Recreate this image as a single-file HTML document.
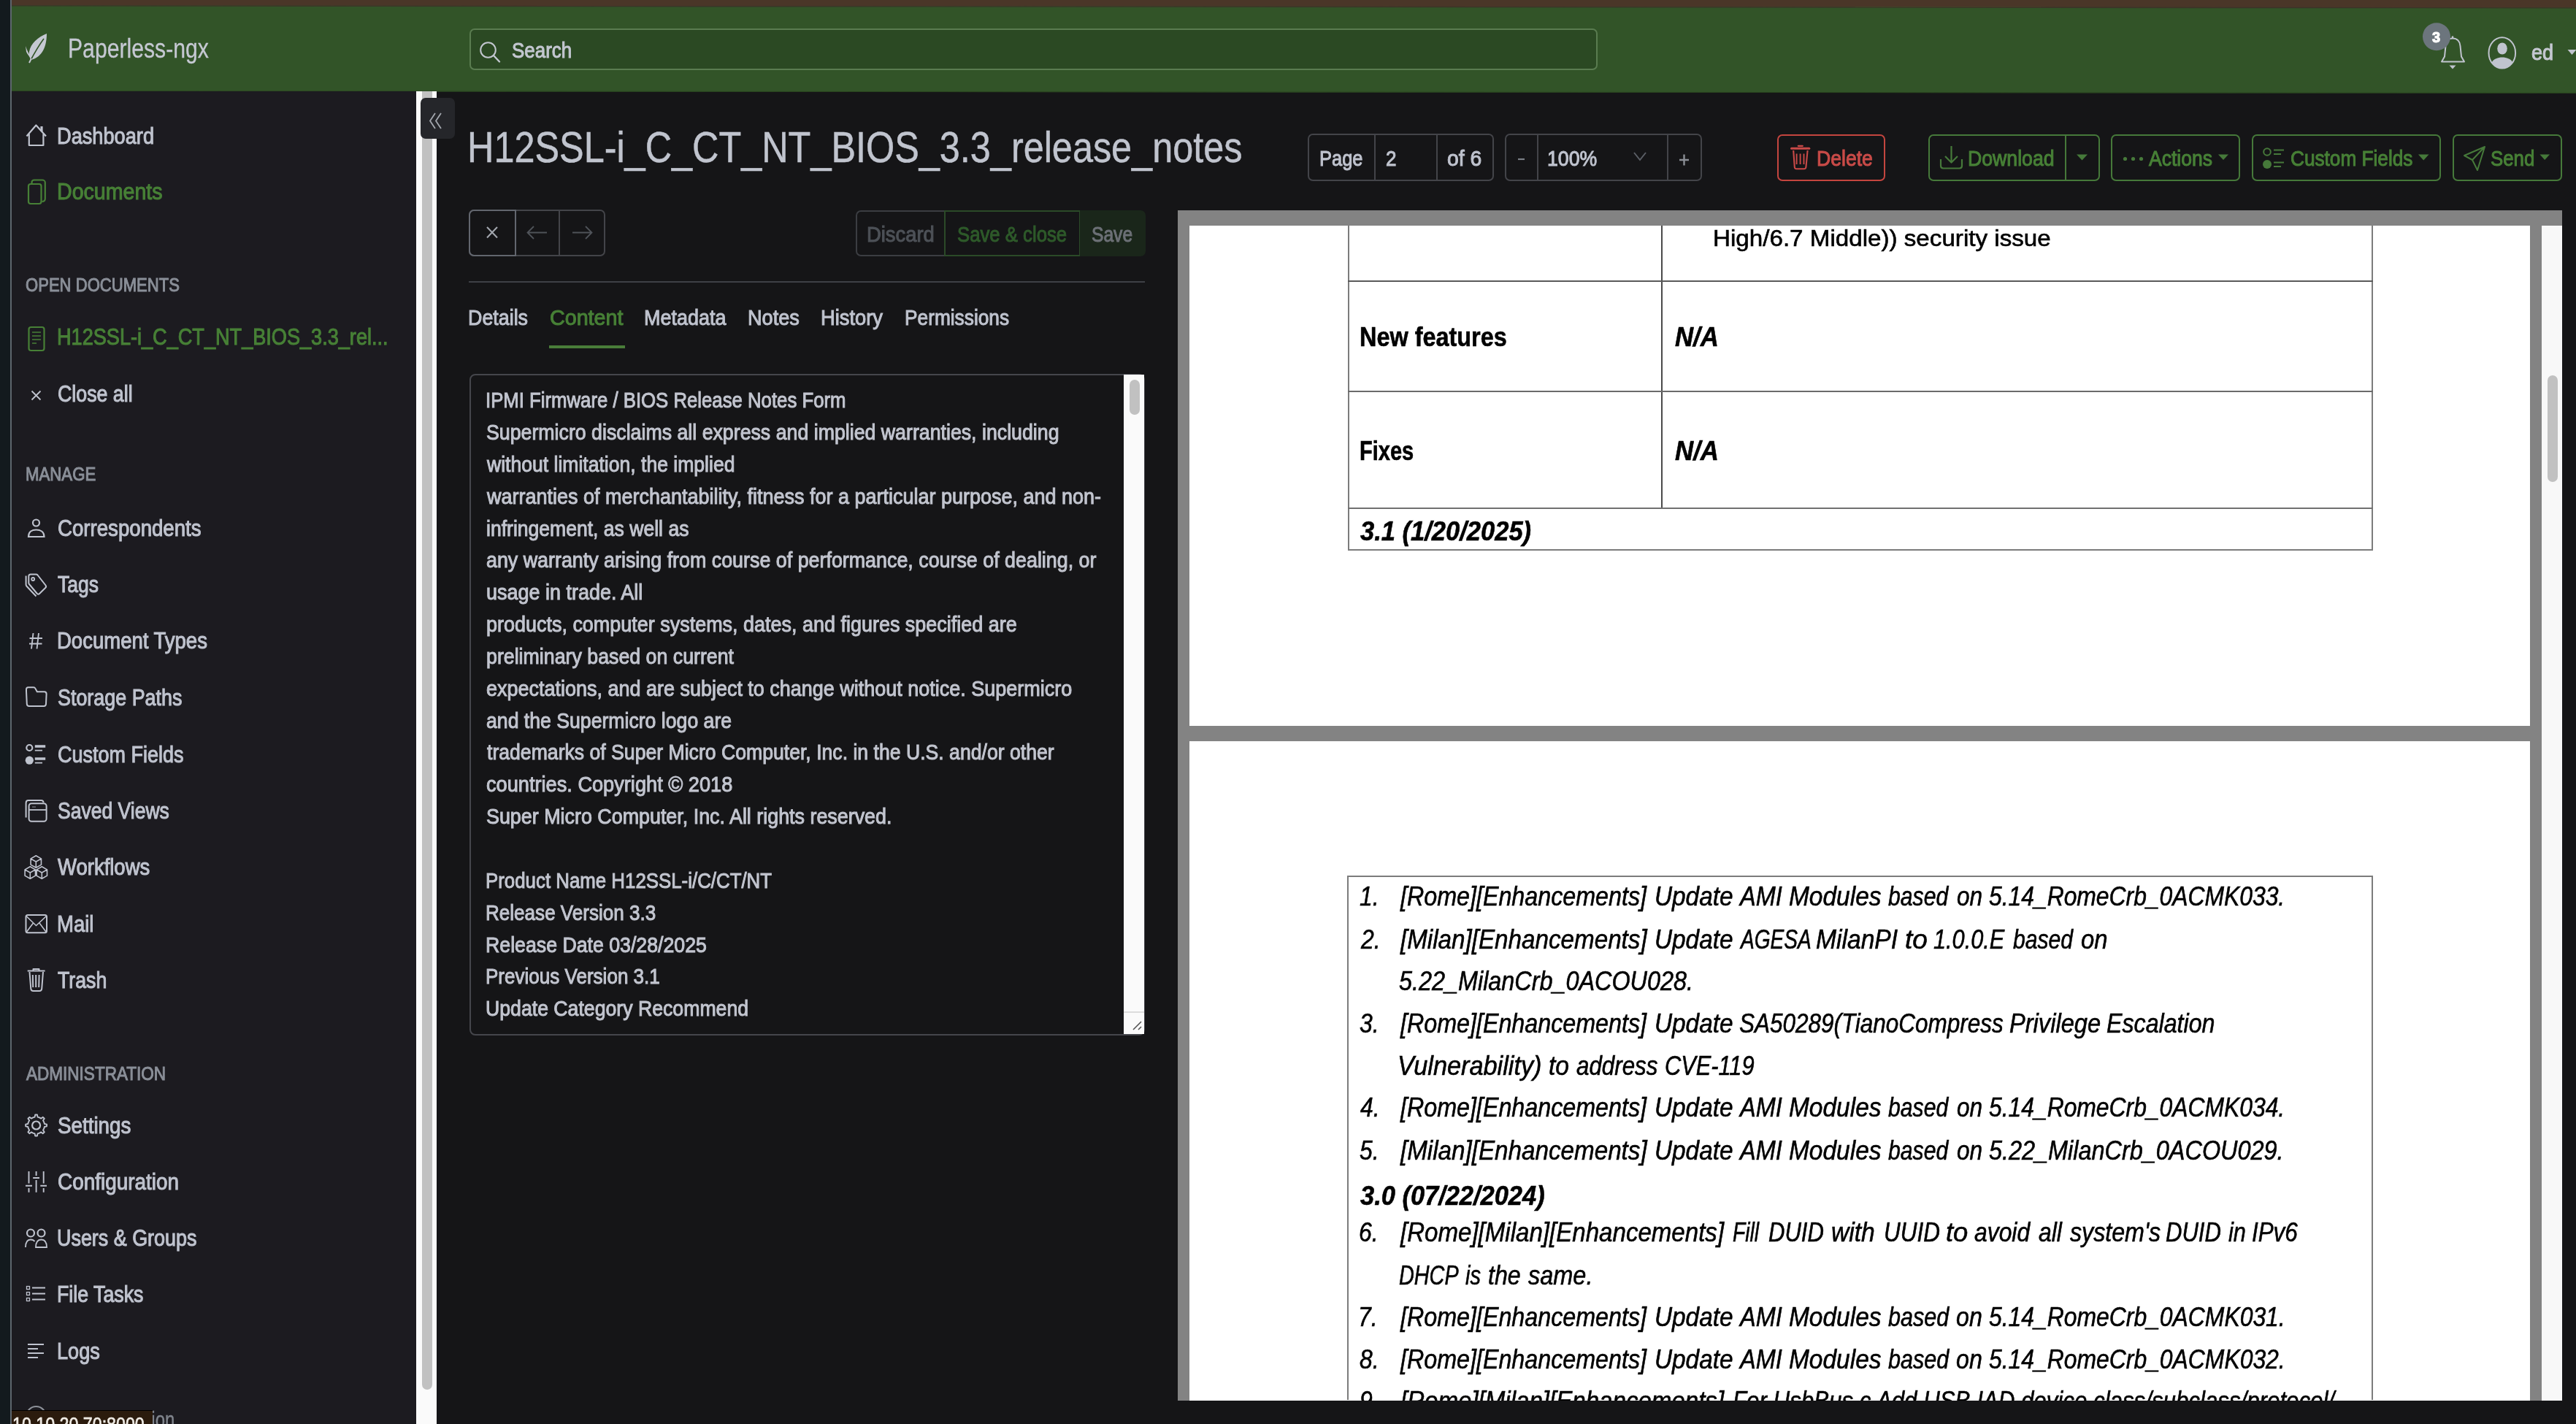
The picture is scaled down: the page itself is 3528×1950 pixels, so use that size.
<!DOCTYPE html>
<html><head><meta charset="utf-8">
<style>
*{box-sizing:border-box;margin:0;padding:0}
html,body{width:3528px;height:1950px;overflow:hidden;background:#151517;font-family:"Liberation Sans",sans-serif;position:relative}
.a{position:absolute}
.t{position:absolute;white-space:pre;line-height:1;transform-origin:0 0}
svg{position:absolute;overflow:visible}
.grp{position:absolute;border:2px solid #434449;border-radius:7px}
.dv{position:absolute;width:2px;background:#434449}
.gb{border-color:#46793a}
.gdv{background:#46793a}
</style></head><body><div id="wrap" style="position:absolute;left:0;top:0;width:3528px;height:1950px;filter:blur(0.45px)">
<!-- chrome -->
<div class="a" style="left:0;top:0;width:14px;height:1950px;background:#131a1e"></div>
<div class="a" style="left:14px;top:0;width:2px;height:1950px;background:#5d666d"></div>
<svg style="left:0;top:0" width="3528" height="130" viewBox="0 0 3528 130">
  <polygon points="16,0 3528,0 3528,127.8 16,125" fill="#325428"/>
  <polygon points="16,0 3528,0 3528,10.3 16,7.3" fill="#4a3628"/>
  <line x1="16" y1="7.9" x2="3528" y2="10.9" stroke="#3b3428" stroke-width="1.3"/>
  <line x1="16" y1="124.6" x2="3528" y2="127.4" stroke="#29431f" stroke-width="1"/>
</svg>
<div class="a" style="left:16px;top:125px;width:554px;height:1825px;background:#1c1b20"></div>
<div class="a" style="left:570px;top:125px;width:28px;height:1825px;background:#fafafa"></div>
<div class="a" style="left:578px;top:125px;width:14px;height:1778px;background:#c1c1c1;border-radius:0 0 7px 7px"></div>

<!-- navbar content -->
<svg style="left:34px;top:45px" width="32" height="42" viewBox="0 0 32 42">
  <path d="M30 1 C18 6 8 14 6 26 C5 31 7 35 9 37 C20 34 30 24 30 1 Z" fill="#c5c8d2"/>
  <path d="M1 18 C3 24 6 30 10 36 C7 34 4 30 2 26 Z" fill="#c5c8d2"/>
  <path d="M26 8 C20 16 14 26 6 41" stroke="#325428" stroke-width="1.6" fill="none"/>
  <path d="M6 41 L9 35" stroke="#c5c8d2" stroke-width="2" fill="none"/>
</svg>
<div class="a" style="left:642.5px;top:38.5px;width:1545px;height:57px;border:2px solid #5a7c50;border-radius:7px;background:#2b4923"></div>
<svg style="left:655px;top:55px" width="34" height="34" viewBox="0 0 34 34">
  <circle cx="13.5" cy="13.5" r="10.3" stroke="#c3c7d0" stroke-width="2" fill="none"/>
  <path d="M21 21 L29 29.5" stroke="#c3c7d0" stroke-width="2.4" stroke-linecap="round"/>
</svg>
<svg style="left:3318px;top:30px" width="64" height="70" viewBox="0 0 64 70">
  <path d="M41 22.5 C35.5 22.5 32 26.5 31.5 33 L30 47.5 L26 54.5 L57 54.5 L53 47.5 L51.5 33 C51 26.5 47 22.5 41 22.5 Z" stroke="#c0c4ce" stroke-width="2" fill="none" stroke-linejoin="round"/>
  <path d="M41 19.5 L41 23" stroke="#c0c4ce" stroke-width="2.4"/>
  <path d="M36.5 59.5 L45.5 59.5 L41 64.5 Z" fill="#c0c4ce"/>
  <circle cx="19" cy="20.3" r="19" fill="#6c757d"/>
</svg>
<svg style="left:3400px;top:40px" width="60" height="70" viewBox="0 0 60 70">
  <ellipse cx="26.8" cy="32.4" rx="18.3" ry="21.2" stroke="#c0c4ce" stroke-width="2" fill="none"/>
  <ellipse cx="27" cy="26.5" rx="6.8" ry="8" fill="#c0c4ce"/>
  <path d="M12.5 45.5 C15.5 40.5 21 38.5 27 38.5 C33 38.5 38.5 40.5 41.5 45.5 C38 50.5 33 53.6 27 53.6 C21 53.6 16 50.5 12.5 45.5 Z" fill="#c0c4ce"/>
</svg>
<svg style="left:3514px;top:67px" width="14" height="10" viewBox="0 0 14 10"><path d="M2.5 1 L14.5 1 L8.5 8 Z" fill="#c0c4ce"/></svg>

<!-- collapse button -->
<div class="a" style="left:576px;top:134px;width:47px;height:56px;background:#25262a;border-radius:7px"></div>
<svg style="left:586px;top:152px" width="24" height="28" viewBox="0 0 24 28">
  <path d="M10 3 L3 13.5 L10 24 M18 3 L11 13.5 L18 24" stroke="#a3a7ae" stroke-width="1.8" fill="none"/>
</svg>

<!-- sidebar icons -->
<g id="sbicons"></g>
<svg style="left:0;top:0" width="600" height="1950" viewBox="0 0 600 1950" fill="none" stroke="#bfc3ce" stroke-width="2.2">
  <!-- house -->
  <path d="M36.5 186.5 L49.4 171.5 L63 186.5 M39.8 183.5 L39.8 199 L59.4 199 L59.4 183.5" stroke-linejoin="round"/><path d="M57 173 L57 180" stroke-width="3.2"/>
  <!-- files (green) -->
  <g stroke="#478036">
    <rect x="39" y="252" width="17.5" height="27" rx="3"/>
    <path d="M43.5 251.5 L43.5 250 C43.5 248 45 246.5 47 246.5 L58 246.5 C60 246.5 61.8 248 61.8 250 L61.8 272 C61.8 274.5 60 276 57.5 276"/>
  </g>
  <!-- file-text (green) -->
  <g stroke="#478036">
    <rect x="39.5" y="448" width="21" height="32" rx="3"/>
    <path d="M44 455 L56 455 M44 460 L56 460 M44 465 L56 465 M44 470 L50 470" stroke-width="1.6"/>
  </g>
  <!-- x close all -->
  <path d="M43.5 535.5 L55.5 547.5 M55.5 535.5 L43.5 547.5" stroke-width="1.8"/>
  <!-- person -->
  <circle cx="49.5" cy="716" r="4.5"/>
  <path d="M39 735 C39 728 44 725.5 49.5 725.5 C55 725.5 60.5 728 60.5 735 Z"/>
  <!-- tags -->
  <path d="M39.3 789 C39.3 787.5 40.5 786.5 42 786.5 L49.5 786.5 C50.3 786.5 51 786.9 51.5 787.5 L62.5 801.5 C63.3 802.5 63.2 803.8 62.4 804.7 L54 813 C53.1 813.9 51.8 813.9 50.9 813 L40 800 C39.5 799.4 39.3 798.7 39.3 798 Z" stroke-linejoin="round" stroke-width="2"/>
  <circle cx="45.2" cy="793" r="2" stroke-width="1.8"/>
  <path d="M35.6 788.5 L35.6 800.5 C35.6 801.4 35.9 802.1 36.5 802.8 L49.5 816.5" stroke-width="2"/>
  <!-- hash -->
  <path d="M45.5 867 L43 888.5 M53 867 L50.5 888.5 M40.5 874 L58 874 M40 881.5 L57.5 881.5" stroke-width="1.9"/>
  <!-- storage folder -->
  <path d="M36 946.5 L36.8 964 C36.9 965.8 38 967 40 967 L60 967 C61.8 967 62.9 965.8 63 964 L63.6 950.5 C63.6 948.5 62.6 947.3 60.6 947.3 L50.8 947.3 L48.3 942.6 C47.8 941.6 47 941.2 46 941.2 L38.6 941.2 C36.9 941.2 36 942.3 36 944 Z" stroke-linejoin="round" stroke-width="2"/>
  <!-- custom fields -->
  <circle cx="40.3" cy="1024" r="4"/>
  <circle cx="40.3" cy="1041.2" r="5.6" fill="#bfc3ce" stroke="none"/>
  <path d="M47.8 1022 L62.2 1022 M47.8 1039 L62.2 1039" stroke-width="3.6"/>
  <path d="M47.8 1027.6 L58 1027.6 M47.8 1044.6 L58 1044.6" stroke-width="1.8"/>
  <!-- saved views (window stack) -->
  <rect x="39.6" y="1100.3" width="24" height="24.4" rx="3.5" stroke-width="2"/>
  <path d="M35.6 1119.5 L35.6 1099.5 C35.6 1097.4 36.9 1096.1 39 1096.1 L56.5 1096.1 C58.3 1096.1 59.4 1097.1 59.6 1098.8" stroke-width="2"/>
  <path d="M40 1109 L63.5 1109" stroke-width="1.8"/>
  <path d="M44 1105 L49 1105" stroke-width="1" stroke="#8a8e96"/>
  <!-- workflows boxes -->
  <path d="M49.3 1171.7 L56.49 1175.85 L56.49 1184.15 L49.3 1188.3 L42.11 1184.15 L42.11 1175.85 Z M42.11 1175.85 L49.3 1180 L56.49 1175.85 M49.3 1180 L49.3 1188.3 M41.3 1186.7 L48.49 1190.85 L48.49 1199.15 L41.3 1203.3 L34.11 1199.15 L34.11 1190.85 Z M34.11 1190.85 L41.3 1195 L48.49 1190.85 M41.3 1195 L41.3 1203.3 M57.3 1186.7 L64.49 1190.85 L64.49 1199.15 L57.3 1203.3 L50.11 1199.15 L50.11 1190.85 Z M50.11 1190.85 L57.3 1195 L64.49 1190.85 M57.3 1195 L57.3 1203.3 " stroke-linejoin="round" stroke-width="1.6"/>
  <!-- mail -->
  <rect x="35.5" y="1253" width="28.5" height="24.2" rx="2.5" stroke-width="2"/>
  <path d="M36 1254.5 L49.5 1267.5 L63.5 1254.5 M36.5 1276 L45.5 1264 M63 1276 L54 1264" stroke-width="1.6"/>
  <!-- trash -->
  <path d="M37.7 1329.5 L61.6 1329.5 M45.5 1329 L45.5 1327 L53.5 1327 L53.5 1329 M40.5 1331 L42.3 1354 C42.5 1356 43.5 1357 45.5 1357 L54 1357 C56 1357 57 1356 57.2 1354 L59 1331 M44.8 1335 L45.2 1352 M49.2 1335 L49.2 1352 M53.6 1335 L53.2 1352" stroke-linejoin="round" stroke-width="2"/>
  <!-- gear -->
  <circle cx="49.6" cy="1541" r="5.5"/>
  <path d="M60.22 1536.60 L60.93 1539.02 L64.04 1539.64 L64.04 1542.36 L60.93 1542.98 L60.22 1545.40 L59.01 1547.61 L60.77 1550.24 L58.84 1552.17 L56.21 1550.41 L54.00 1551.62 L51.58 1552.33 L50.96 1555.44 L48.24 1555.44 L47.62 1552.33 L45.20 1551.62 L42.99 1550.41 L40.36 1552.17 L38.43 1550.24 L40.19 1547.61 L38.98 1545.40 L38.27 1542.98 L35.16 1542.36 L35.16 1539.64 L38.27 1539.02 L38.98 1536.60 L40.19 1534.39 L38.43 1531.76 L40.36 1529.83 L42.99 1531.59 L45.20 1530.38 L47.62 1529.67 L48.24 1526.56 L50.96 1526.56 L51.58 1529.67 L54.00 1530.38 L56.21 1531.59 L58.84 1529.83 L60.77 1531.76 L59.01 1534.39 Z" stroke-linejoin="round" stroke-width="1.9"/>
  <!-- sliders -->
  <path d="M39.5 1604 L39.5 1620.5 M39.5 1627 L39.5 1632.7 M49.6 1604 L49.6 1610 M49.6 1616 L49.6 1632.7 M59.7 1604 L59.7 1620.5 M59.7 1627 L59.7 1632.7 M35 1623.8 L44 1623.8 M45.2 1613 L54 1613 M55.3 1623.8 L64 1623.8" stroke-width="1.9"/>
  <!-- people -->
  <circle cx="42" cy="1688.5" r="5"/>
  <circle cx="56.5" cy="1688.5" r="5"/>
  <path d="M35 1708 C35 1700 38 1697.5 42 1697.5 C44.5 1697.5 46.5 1698.5 47.5 1700 M49 1708 C49 1700 52 1697.5 56.5 1697.5 C61 1697.5 64 1700 64 1708 Z" stroke-width="1.8"/>
  <!-- list task -->
  <rect x="36.5" y="1761.5" width="4" height="4" stroke-width="1.3"/>
  <rect x="36.5" y="1769.5" width="4" height="4" stroke-width="1.3"/>
  <rect x="36.5" y="1777.5" width="4" height="4" stroke-width="1.3"/>
  <path d="M44 1763.5 L62 1763.5 M44 1771.5 L62 1771.5 M44 1779.5 L62 1779.5" stroke-width="1.8"/>
  <!-- logs text-left -->
  <path d="M38 1841 L60 1841 M38 1847 L52 1847 M38 1853 L60 1853 M38 1859 L52 1859" stroke-width="1.8"/>
  <!-- info circle (documentation) -->
  <circle cx="49.5" cy="1939" r="13" stroke="#8d9199"/>
</svg>

<!-- header toolbar groups -->
<div class="grp" style="left:1791px;top:183px;width:255px;height:64.5px"></div>
<div class="dv" style="left:1882px;top:183px;height:64.5px"></div>
<div class="dv" style="left:1967px;top:183px;height:64.5px"></div>
<div class="grp" style="left:2061px;top:183px;width:269.5px;height:64.5px"></div>
<div class="dv" style="left:2105px;top:183px;height:64.5px"></div>
<div class="dv" style="left:2283px;top:183px;height:64.5px"></div>
<svg style="left:2074px;top:200px" width="260" height="36" viewBox="0 0 260 36" fill="none">
  <path d="M5 18 L14 18" stroke="#7b7f86" stroke-width="2.2"/>
  <path d="M164 9 L172 19 L180 9" stroke="#5b5f66" stroke-width="2"/>
  <path d="M226 19 L239 19 M232.5 11.5 L232.5 26.5" stroke="#8a8e95" stroke-width="2.4"/>
</svg>
<div class="grp" style="left:2433.5px;top:183.5px;width:148.5px;height:64px;border-color:#c4453f"></div>
<svg style="left:2450px;top:196px" width="32" height="38" viewBox="0 0 32 38" fill="none" stroke="#c94a48" stroke-width="2.1">
  <path d="M3.5 7.2 L27.8 7.2" stroke-width="3" stroke-linecap="round"/>
  <path d="M12.8 3.8 L18.8 3.8" stroke-width="2.2" stroke-linecap="round"/>
  <path d="M6.2 10 L7.8 32.8 C7.9 34.4 8.9 35.3 10.4 35.3 L20.8 35.3 C22.3 35.3 23.3 34.4 23.4 32.8 L25.6 10" stroke-linejoin="round"/>
  <path d="M10.6 14.5 L10.6 29 M15.6 14.5 L15.6 29 M20.5 14.5 L20.5 29" stroke-width="1.9"/>
</svg>
<div class="grp gb" style="left:2641px;top:183.5px;width:235px;height:64px"></div>
<div class="dv gdv" style="left:2828px;top:183.5px;height:64px"></div>
<svg style="left:2655px;top:198px" width="240" height="36" viewBox="0 0 240 36" fill="none" stroke="#46793a" stroke-width="2.2">
  <path d="M17.5 2 L17.5 24 M9 16 L17.5 24.5 L26 16 M3 20 L3 29 C3 31 4.5 32.5 6.5 32.5 L28.5 32.5 C30.5 32.5 32 31 32 29 L32 20" stroke-linejoin="round"/>
  <path d="M189 13.5 L204 13.5 L196.5 21.5 Z" fill="#46793a" stroke="none"/>
</svg>
<div class="grp gb" style="left:2891px;top:183.5px;width:177px;height:64px"></div>
<svg style="left:2905px;top:205px" width="160" height="24" viewBox="0 0 160 24" fill="#46793a">
  <circle cx="5.5" cy="12.5" r="2.6"/><circle cx="16.5" cy="12.5" r="2.6"/><circle cx="27.5" cy="12.5" r="2.6"/>
  <path d="M133 6.5 L147 6.5 L140 14 Z"/>
</svg>
<div class="grp gb" style="left:3083.5px;top:183.5px;width:259.5px;height:64px"></div>
<svg style="left:3097px;top:200px" width="240" height="36" viewBox="0 0 240 36" fill="none" stroke="#46793a" stroke-width="2">
  <circle cx="8" cy="8" r="4.8"/>
  <circle cx="8" cy="25" r="6" fill="#46793a" stroke="none"/>
  <path d="M17 5.5 L31 5.5 M17 11 L27 11 M17 22.5 L31 22.5 M17 28 L27 28" stroke-width="2.2"/>
  <path d="M215 11.5 L229.5 11.5 L222.2 19.5 Z" fill="#46793a" stroke="none"/>
</svg>
<div class="grp gb" style="left:3358.5px;top:183.5px;width:150.5px;height:64px"></div>
<svg style="left:3372px;top:198px" width="130" height="40" viewBox="0 0 130 40" fill="none" stroke="#46793a" stroke-width="2">
  <path d="M31 3 L3 15 L14 21 L21 35 Z M31 3 L14 21" stroke-linejoin="round"/>
  <path d="M106.5 13.5 L120 13.5 L113.2 21 Z" fill="#46793a" stroke="none"/>
</svg>

<!-- close / prev / next -->
<div class="grp" style="left:642px;top:287px;width:187px;height:64px;border-color:#434449"></div>
<div class="a" style="left:642px;top:287px;width:65px;height:64px;border:2px solid #62666e;border-radius:7px 0 0 7px"></div>
<div class="dv" style="left:765px;top:287px;height:64px"></div>
<svg style="left:660px;top:305px" width="160" height="30" viewBox="0 0 160 30" fill="none">
  <path d="M7 6 L21 20.5 M21 6 L7 20.5" stroke="#a4a8b0" stroke-width="2"/>
  <path d="M63 13.5 L89 13.5 M71 5 L62.5 13.5 L71 22" stroke="#4f5359" stroke-width="1.8"/>
  <path d="M124 13.5 L150 13.5 M142 5 L150.5 13.5 L142 22" stroke="#4f5359" stroke-width="1.8"/>
</svg>

<!-- discard / save & close / save -->
<div class="a" style="left:1172px;top:287.5px;width:124px;height:63.5px;border:2px solid #3b3d42;border-right:none;border-radius:7px 0 0 7px"></div>
<div class="a" style="left:1292.5px;top:287.5px;width:187px;height:63.5px;border:2px solid #2b4a28"></div>
<div class="a" style="left:1478.5px;top:287.5px;width:90px;height:63.5px;background:#1a261a;border-radius:0 7px 7px 0"></div>

<!-- hr + tab underline -->
<div class="a" style="left:642px;top:384.5px;width:926px;height:2px;background:#3e4046"></div>
<div class="a" style="left:752px;top:472.5px;width:103.5px;height:4.5px;background:#497d39"></div>

<!-- textarea -->
<div class="a" style="left:642.5px;top:511.5px;width:925px;height:906px;border:2px solid #45464c;border-radius:8px;background:#151517"></div>
<div class="a" style="left:1539px;top:513px;width:28px;height:903px;background:#fafafa"></div>
<div class="a" style="left:1546.5px;top:519.5px;width:14.5px;height:48px;background:#c1c1c1;border-radius:7px"></div>
<div class="a" style="left:1539px;top:1385px;width:28px;height:1.5px;background:#dcdcdc"></div>
<svg style="left:1550px;top:1396px" width="16" height="18" viewBox="0 0 16 18" fill="none" stroke="#555" stroke-width="1.6">
  <path d="M2 14 L13 3 M9 14 L13 10"/>
</svg>

<!-- PDF -->
<div class="a" style="left:1612.5px;top:288px;width:1896.5px;height:1629.5px;background:#838383;overflow:hidden">
  <div class="a" style="left:16.5px;top:21px;width:1836px;height:685px;background:#fff"></div>
  <div class="a" style="left:16.5px;top:727px;width:1836px;height:1000px;background:#fff"></div>
  <div class="a" style="left:1868.5px;top:21px;width:28px;height:1610px;background:#f8f8f8"></div>
  <div class="a" style="left:1876.5px;top:226px;width:14px;height:146px;background:#c1c1c1;border-radius:7px"></div>
</div>
<!-- table 1 -->
<div class="a" style="left:1845.5px;top:309px;width:2px;height:444px;background:#7c7c7c"></div>
<div class="a" style="left:3247.5px;top:309px;width:2px;height:444px;background:#7c7c7c"></div>
<div class="a" style="left:2275px;top:309px;width:2px;height:387px;background:#4a4a4a"></div>
<div class="a" style="left:1845.5px;top:383.5px;width:1404px;height:2px;background:#5a5a5a"></div>
<div class="a" style="left:1845.5px;top:534.5px;width:1404px;height:2px;background:#6a6a6a"></div>
<div class="a" style="left:1845.5px;top:695px;width:1404px;height:2px;background:#707070"></div>
<div class="a" style="left:1845.5px;top:751.5px;width:1404px;height:2px;background:#7c7c7c"></div>
<!-- table 2 -->
<div class="a" style="left:1845px;top:1199px;width:1404.5px;height:2px;background:#7c7c7c"></div>
<div class="a" style="left:1845px;top:1199px;width:2px;height:718px;background:#7c7c7c"></div>
<div class="a" style="left:3247.5px;top:1199px;width:2px;height:718px;background:#7c7c7c"></div>

<div class="t" style="left:92.5px;top:49.3px;font-size:36px;color:#c5c8d2;transform:scaleX(0.8379);-webkit-text-stroke:0.3px #c5c8d2;">Paperless-ngx</div>
<div class="t" style="left:700.5px;top:54.3px;font-size:30px;color:#c3c7d0;transform:scaleX(0.8645);-webkit-text-stroke:1.05px #c3c7d0;">Search</div>
<div class="t" style="left:3467.1px;top:57.5px;font-size:29px;color:#c5c8d2;transform:scaleX(0.9333);-webkit-text-stroke:1.05px #c5c8d2;">ed</div>
<div class="t" style="left:3331.0px;top:41.0px;font-size:20px;color:#ffffff;font-weight:700;-webkit-text-stroke:1.05px #ffffff;">3</div>
<div class="t" style="left:77.6px;top:170.6px;font-size:31px;color:#bfc3ce;transform:scaleX(0.8770);-webkit-text-stroke:1.05px #bfc3ce;">Dashboard</div>
<div class="t" style="left:77.6px;top:247.4px;font-size:31px;color:#478036;transform:scaleX(0.9221);-webkit-text-stroke:1.05px #478036;">Documents</div>
<div class="t" style="left:77.7px;top:446.2px;font-size:31px;color:#478036;transform:scaleX(0.8746);-webkit-text-stroke:1.05px #478036;">H12SSL-i_C_CT_NT_BIOS_3.3_rel...</div>
<div class="t" style="left:78.5px;top:523.7px;font-size:31px;color:#bfc3ce;transform:scaleX(0.8632);-webkit-text-stroke:1.05px #bfc3ce;">Close all</div>
<div class="t" style="left:78.5px;top:707.6px;font-size:31px;color:#bfc3ce;transform:scaleX(0.8913);-webkit-text-stroke:1.05px #bfc3ce;">Correspondents</div>
<div class="t" style="left:79.4px;top:784.7px;font-size:31px;color:#bfc3ce;transform:scaleX(0.8554);-webkit-text-stroke:1.05px #bfc3ce;">Tags</div>
<div class="t" style="left:77.6px;top:862.4px;font-size:31px;color:#bfc3ce;transform:scaleX(0.8874);-webkit-text-stroke:1.05px #bfc3ce;">Document Types</div>
<div class="t" style="left:78.5px;top:940.3px;font-size:31px;color:#bfc3ce;transform:scaleX(0.8672);-webkit-text-stroke:1.05px #bfc3ce;">Storage Paths</div>
<div class="t" style="left:78.5px;top:1017.6px;font-size:31px;color:#bfc3ce;transform:scaleX(0.8706);-webkit-text-stroke:1.05px #bfc3ce;">Custom Fields</div>
<div class="t" style="left:78.5px;top:1094.8px;font-size:31px;color:#bfc3ce;transform:scaleX(0.8554);-webkit-text-stroke:1.05px #bfc3ce;">Saved Views</div>
<div class="t" style="left:79.4px;top:1171.9px;font-size:31px;color:#bfc3ce;transform:scaleX(0.8866);-webkit-text-stroke:1.05px #bfc3ce;">Workflows</div>
<div class="t" style="left:77.6px;top:1249.9px;font-size:31px;color:#bfc3ce;transform:scaleX(0.8870);-webkit-text-stroke:1.05px #bfc3ce;">Mail</div>
<div class="t" style="left:79.4px;top:1327.2px;font-size:31px;color:#bfc3ce;transform:scaleX(0.8623);-webkit-text-stroke:1.05px #bfc3ce;">Trash</div>
<div class="t" style="left:78.5px;top:1525.7px;font-size:31px;color:#bfc3ce;transform:scaleX(0.8964);-webkit-text-stroke:1.05px #bfc3ce;">Settings</div>
<div class="t" style="left:78.5px;top:1602.9px;font-size:31px;color:#bfc3ce;transform:scaleX(0.9005);-webkit-text-stroke:1.05px #bfc3ce;">Configuration</div>
<div class="t" style="left:77.7px;top:1680.4px;font-size:31px;color:#bfc3ce;transform:scaleX(0.8679);-webkit-text-stroke:1.05px #bfc3ce;">Users &amp; Groups</div>
<div class="t" style="left:77.7px;top:1757.3px;font-size:31px;color:#bfc3ce;transform:scaleX(0.8630);-webkit-text-stroke:1.05px #bfc3ce;">File Tasks</div>
<div class="t" style="left:77.6px;top:1835.2px;font-size:31px;color:#bfc3ce;transform:scaleX(0.8754);-webkit-text-stroke:1.05px #bfc3ce;">Logs</div>
<div class="t" style="left:77.9px;top:1928.5px;font-size:31px;color:#80858d;transform:scaleX(0.7737);-webkit-text-stroke:0.4px #80858d;">Documentation</div>
<div class="t" style="left:34.9px;top:376.8px;font-size:26px;color:#8a8f98;transform:scaleX(0.8490);-webkit-text-stroke:1.05px #8a8f98;">OPEN DOCUMENTS</div>
<div class="t" style="left:34.8px;top:636.3px;font-size:26px;color:#8a8f98;transform:scaleX(0.8541);-webkit-text-stroke:1.05px #8a8f98;">MANAGE</div>
<div class="t" style="left:35.7px;top:1456.5px;font-size:26px;color:#8a8f98;transform:scaleX(0.8667);-webkit-text-stroke:1.05px #8a8f98;">ADMINISTRATION</div>
<div class="t" style="left:639.8px;top:172.1px;font-size:60px;color:#c0c4ce;transform:scaleX(0.8397);-webkit-text-stroke:0.5px #c0c4ce;">H12SSL-i_C_CT_NT_BIOS_3.3_release_notes</div>
<div class="t" style="left:1806.9px;top:201.8px;font-size:30px;color:#bfc3ce;transform:scaleX(0.8485);-webkit-text-stroke:1.05px #bfc3ce;">Page</div>
<div class="t" style="left:1898.4px;top:201.8px;font-size:30px;color:#bfc3ce;transform:scaleX(0.8667);-webkit-text-stroke:1.05px #bfc3ce;">2</div>
<div class="t" style="left:1982.2px;top:201.8px;font-size:30px;color:#bfc3ce;transform:scaleX(0.9437);-webkit-text-stroke:1.05px #bfc3ce;">of 6</div>
<div class="t" style="left:2119.0px;top:202.2px;font-size:30px;color:#bfc3ce;transform:scaleX(0.8892);-webkit-text-stroke:1.05px #bfc3ce;">100%</div>
<div class="t" style="left:2488.1px;top:202.2px;font-size:30px;color:#c94b48;transform:scaleX(0.8869);-webkit-text-stroke:1.05px #c94b48;">Delete</div>
<div class="t" style="left:2694.9px;top:202.2px;font-size:30px;color:#478036;transform:scaleX(0.8885);-webkit-text-stroke:1.05px #478036;">Download</div>
<div class="t" style="left:2943.4px;top:202.2px;font-size:30px;color:#478036;transform:scaleX(0.8837);-webkit-text-stroke:1.05px #478036;">Actions</div>
<div class="t" style="left:3137.1px;top:202.2px;font-size:30px;color:#478036;transform:scaleX(0.8732);-webkit-text-stroke:1.05px #478036;">Custom Fields</div>
<div class="t" style="left:3410.5px;top:202.2px;font-size:30px;color:#478036;transform:scaleX(0.8618);-webkit-text-stroke:1.05px #478036;">Send</div>
<div class="t" style="left:1187.2px;top:306.0px;font-size:30px;color:#4d5157;transform:scaleX(0.9122);-webkit-text-stroke:1.05px #4d5157;">Discard</div>
<div class="t" style="left:1311.1px;top:306.0px;font-size:30px;color:#2e5a2a;transform:scaleX(0.8575);-webkit-text-stroke:1.05px #2e5a2a;">Save &amp; close</div>
<div class="t" style="left:1495.2px;top:306.0px;font-size:30px;color:#6c7076;transform:scaleX(0.8209);-webkit-text-stroke:1.05px #6c7076;">Save</div>
<div class="t" style="left:641.3px;top:420.3px;font-size:30px;color:#bfc3ce;transform:scaleX(0.8944);-webkit-text-stroke:1.05px #bfc3ce;">Details</div>
<div class="t" style="left:752.6px;top:420.3px;font-size:30px;color:#478036;transform:scaleX(0.9562);-webkit-text-stroke:1.05px #478036;">Content</div>
<div class="t" style="left:882.2px;top:420.3px;font-size:30px;color:#bfc3ce;transform:scaleX(0.8984);-webkit-text-stroke:1.05px #bfc3ce;">Metadata</div>
<div class="t" style="left:1023.8px;top:420.3px;font-size:30px;color:#bfc3ce;transform:scaleX(0.9039);-webkit-text-stroke:1.05px #bfc3ce;">Notes</div>
<div class="t" style="left:1124.0px;top:420.3px;font-size:30px;color:#bfc3ce;transform:scaleX(0.9109);-webkit-text-stroke:1.05px #bfc3ce;">History</div>
<div class="t" style="left:1239.2px;top:420.3px;font-size:30px;color:#bfc3ce;transform:scaleX(0.8758);-webkit-text-stroke:1.05px #bfc3ce;">Permissions</div>
<div class="t" style="left:664.8px;top:533.2px;font-size:30px;color:#c2c5cf;transform:scaleX(0.8580);-webkit-text-stroke:1.05px #c2c5cf;">IPMI Firmware / BIOS Release Notes Form</div>
<div class="t" style="left:665.6px;top:577.0px;font-size:30px;color:#c2c5cf;transform:scaleX(0.8911);-webkit-text-stroke:1.05px #c2c5cf;">Supermicro disclaims all express and implied warranties, including</div>
<div class="t" style="left:667.4px;top:620.9px;font-size:30px;color:#c2c5cf;transform:scaleX(0.8850);-webkit-text-stroke:1.05px #c2c5cf;">without limitation, the implied</div>
<div class="t" style="left:667.4px;top:664.7px;font-size:30px;color:#c2c5cf;transform:scaleX(0.8996);-webkit-text-stroke:1.05px #c2c5cf;">warranties of merchantability, fitness for a particular purpose, and non-</div>
<div class="t" style="left:665.6px;top:708.6px;font-size:30px;color:#c2c5cf;transform:scaleX(0.8850);-webkit-text-stroke:1.05px #c2c5cf;">infringement, as well as</div>
<div class="t" style="left:665.6px;top:752.4px;font-size:30px;color:#c2c5cf;transform:scaleX(0.8947);-webkit-text-stroke:1.05px #c2c5cf;">any warranty arising from course of performance, course of dealing, or</div>
<div class="t" style="left:665.6px;top:796.2px;font-size:30px;color:#c2c5cf;transform:scaleX(0.8987);-webkit-text-stroke:1.05px #c2c5cf;">usage in trade. All</div>
<div class="t" style="left:665.6px;top:840.1px;font-size:30px;color:#c2c5cf;transform:scaleX(0.8986);-webkit-text-stroke:1.05px #c2c5cf;">products, computer systems, dates, and figures specified are</div>
<div class="t" style="left:665.6px;top:883.9px;font-size:30px;color:#c2c5cf;transform:scaleX(0.8918);-webkit-text-stroke:1.05px #c2c5cf;">preliminary based on current</div>
<div class="t" style="left:665.6px;top:927.8px;font-size:30px;color:#c2c5cf;transform:scaleX(0.8991);-webkit-text-stroke:1.05px #c2c5cf;">expectations, and are subject to change without notice. Supermicro</div>
<div class="t" style="left:665.6px;top:971.6px;font-size:30px;color:#c2c5cf;transform:scaleX(0.8878);-webkit-text-stroke:1.05px #c2c5cf;">and the Supermicro logo are</div>
<div class="t" style="left:666.5px;top:1015.4px;font-size:30px;color:#c2c5cf;transform:scaleX(0.8872);-webkit-text-stroke:1.05px #c2c5cf;">trademarks of Super Micro Computer, Inc. in the U.S. and/or other</div>
<div class="t" style="left:665.6px;top:1059.3px;font-size:30px;color:#c2c5cf;transform:scaleX(0.9059);-webkit-text-stroke:1.05px #c2c5cf;">countries. Copyright &copy; 2018</div>
<div class="t" style="left:665.6px;top:1103.1px;font-size:30px;color:#c2c5cf;transform:scaleX(0.8955);-webkit-text-stroke:1.05px #c2c5cf;">Super Micro Computer, Inc. All rights reserved.</div>
<div class="t" style="left:664.8px;top:1190.8px;font-size:30px;color:#c2c5cf;transform:scaleX(0.8614);-webkit-text-stroke:1.05px #c2c5cf;">Product Name H12SSL-i/C/CT/NT</div>
<div class="t" style="left:664.8px;top:1234.6px;font-size:30px;color:#c2c5cf;transform:scaleX(0.8688);-webkit-text-stroke:1.05px #c2c5cf;">Release Version 3.3</div>
<div class="t" style="left:664.7px;top:1278.5px;font-size:30px;color:#c2c5cf;transform:scaleX(0.8902);-webkit-text-stroke:1.05px #c2c5cf;">Release Date 03/28/2025</div>
<div class="t" style="left:664.8px;top:1322.3px;font-size:30px;color:#c2c5cf;transform:scaleX(0.8678);-webkit-text-stroke:1.05px #c2c5cf;">Previous Version 3.1</div>
<div class="t" style="left:664.7px;top:1366.2px;font-size:30px;color:#c2c5cf;transform:scaleX(0.8886);-webkit-text-stroke:1.05px #c2c5cf;">Update Category Recommend</div>
<div class="t" style="left:2346.4px;top:311.3px;font-size:31px;color:#000000;transform:scaleX(1.0700);-webkit-text-stroke:0.6px #000000;">High/6.7 Middle)) security issue</div>
<div class="t" style="left:1862.2px;top:442.7px;font-size:37px;color:#000000;font-weight:700;transform:scaleX(0.8762);-webkit-text-stroke:0.6px #000000;">New features</div>
<div class="t" style="left:2293.8px;top:442.6px;font-size:37px;color:#000000;font-weight:700;font-style:italic;transform:scaleX(0.9387);-webkit-text-stroke:0.6px #000000;">N/A</div>
<div class="t" style="left:1862.2px;top:598.7px;font-size:37px;color:#000000;font-weight:700;transform:scaleX(0.7848);-webkit-text-stroke:0.6px #000000;">Fixes</div>
<div class="t" style="left:2293.5px;top:598.7px;font-size:37px;color:#000000;font-weight:700;font-style:italic;transform:scaleX(0.9403);-webkit-text-stroke:0.6px #000000;">N/A</div>
<div class="t" style="left:1862.6px;top:709.3px;font-size:37px;color:#000000;font-weight:700;font-style:italic;transform:scaleX(0.9327);-webkit-text-stroke:0.6px #000000;">3.1 (1/20/2025)</div>
<div class="t" style="left:1862.1px;top:1209.3px;font-size:37px;color:#000000;font-style:italic;transform:scaleX(0.8600);-webkit-text-stroke:0.6px #000000;">1.</div>
<div class="t" style="left:1918.1px;top:1209.3px;font-size:37px;color:#000000;font-style:italic;transform:scaleX(0.8717);-webkit-text-stroke:0.6px #000000;">[Rome][Enhancements]</div>
<div class="t" style="left:2265.6px;top:1209.3px;font-size:37px;color:#000000;font-style:italic;transform:scaleX(0.9009);-webkit-text-stroke:0.6px #000000;">Update</div>
<div class="t" style="left:2382.9px;top:1209.3px;font-size:37px;color:#000000;font-style:italic;transform:scaleX(0.8779);-webkit-text-stroke:0.6px #000000;">AMI</div>
<div class="t" style="left:2449.6px;top:1209.3px;font-size:37px;color:#000000;font-style:italic;transform:scaleX(0.9043);-webkit-text-stroke:0.6px #000000;">Modules</div>
<div class="t" style="left:2586.3px;top:1209.3px;font-size:37px;color:#000000;font-style:italic;transform:scaleX(0.8157);-webkit-text-stroke:0.6px #000000;">based</div>
<div class="t" style="left:2679.7px;top:1209.3px;font-size:37px;color:#000000;font-style:italic;transform:scaleX(0.8538);-webkit-text-stroke:0.6px #000000;">on</div>
<div class="t" style="left:2724.1px;top:1209.3px;font-size:37px;color:#000000;font-style:italic;transform:scaleX(0.8603);-webkit-text-stroke:0.6px #000000;">5.14_RomeCrb_0ACMK033.</div>
<div class="t" style="left:1863.9px;top:1267.5px;font-size:37px;color:#000000;font-style:italic;transform:scaleX(0.8600);-webkit-text-stroke:0.6px #000000;">2.</div>
<div class="t" style="left:1918.1px;top:1267.5px;font-size:37px;color:#000000;font-style:italic;transform:scaleX(0.8971);-webkit-text-stroke:0.6px #000000;">[Milan][Enhancements]</div>
<div class="t" style="left:2265.6px;top:1267.5px;font-size:37px;color:#000000;font-style:italic;transform:scaleX(0.9009);-webkit-text-stroke:0.6px #000000;">Update</div>
<div class="t" style="left:2384.0px;top:1267.5px;font-size:37px;color:#000000;font-style:italic;transform:scaleX(0.7586);-webkit-text-stroke:0.6px #000000;">AGESA</div>
<div class="t" style="left:2487.0px;top:1267.5px;font-size:37px;color:#000000;font-style:italic;transform:scaleX(0.9090);-webkit-text-stroke:0.6px #000000;">MilanPI</div>
<div class="t" style="left:2609.0px;top:1267.5px;font-size:37px;color:#000000;font-style:italic;-webkit-text-stroke:0.6px #000000;">to</div>
<div class="t" style="left:2647.9px;top:1267.5px;font-size:37px;color:#000000;font-style:italic;transform:scaleX(0.8299);-webkit-text-stroke:0.6px #000000;">1.0.0.E</div>
<div class="t" style="left:2756.9px;top:1267.5px;font-size:37px;color:#000000;font-style:italic;transform:scaleX(0.8147);-webkit-text-stroke:0.6px #000000;">based</div>
<div class="t" style="left:2850.3px;top:1267.5px;font-size:37px;color:#000000;font-style:italic;transform:scaleX(0.8872);-webkit-text-stroke:0.6px #000000;">on</div>
<div class="t" style="left:1916.3px;top:1324.5px;font-size:37px;color:#000000;font-style:italic;transform:scaleX(0.8746);-webkit-text-stroke:0.6px #000000;">5.22_MilanCrb_0ACOU028.</div>
<div class="t" style="left:1862.1px;top:1382.7px;font-size:37px;color:#000000;font-style:italic;transform:scaleX(0.8600);-webkit-text-stroke:0.6px #000000;">3.</div>
<div class="t" style="left:1918.1px;top:1382.7px;font-size:37px;color:#000000;font-style:italic;transform:scaleX(0.8717);-webkit-text-stroke:0.6px #000000;">[Rome][Enhancements]</div>
<div class="t" style="left:2265.6px;top:1382.7px;font-size:37px;color:#000000;font-style:italic;transform:scaleX(0.9009);-webkit-text-stroke:0.6px #000000;">Update</div>
<div class="t" style="left:2381.6px;top:1382.7px;font-size:37px;color:#000000;font-style:italic;transform:scaleX(0.8502);-webkit-text-stroke:0.6px #000000;">SA50289(TianoCompress</div>
<div class="t" style="left:2751.8px;top:1382.7px;font-size:37px;color:#000000;font-style:italic;transform:scaleX(0.8814);-webkit-text-stroke:0.6px #000000;">Privilege</div>
<div class="t" style="left:2884.9px;top:1382.7px;font-size:37px;color:#000000;font-style:italic;transform:scaleX(0.8698);-webkit-text-stroke:0.6px #000000;">Escalation</div>
<div class="t" style="left:1914.4px;top:1441.3px;font-size:37px;color:#000000;font-style:italic;transform:scaleX(0.9263);-webkit-text-stroke:0.6px #000000;">Vulnerability)</div>
<div class="t" style="left:2120.9px;top:1441.3px;font-size:37px;color:#000000;font-style:italic;transform:scaleX(0.9103);-webkit-text-stroke:0.6px #000000;">to</div>
<div class="t" style="left:2159.3px;top:1441.3px;font-size:37px;color:#000000;font-style:italic;transform:scaleX(0.8466);-webkit-text-stroke:0.6px #000000;">address</div>
<div class="t" style="left:2279.6px;top:1441.3px;font-size:37px;color:#000000;font-style:italic;transform:scaleX(0.8317);-webkit-text-stroke:0.6px #000000;">CVE-119</div>
<div class="t" style="left:1863.0px;top:1497.5px;font-size:37px;color:#000000;font-style:italic;transform:scaleX(0.8600);-webkit-text-stroke:0.6px #000000;">4.</div>
<div class="t" style="left:1918.1px;top:1497.5px;font-size:37px;color:#000000;font-style:italic;transform:scaleX(0.8717);-webkit-text-stroke:0.6px #000000;">[Rome][Enhancements]</div>
<div class="t" style="left:2265.6px;top:1497.5px;font-size:37px;color:#000000;font-style:italic;transform:scaleX(0.9009);-webkit-text-stroke:0.6px #000000;">Update</div>
<div class="t" style="left:2382.9px;top:1497.5px;font-size:37px;color:#000000;font-style:italic;transform:scaleX(0.8779);-webkit-text-stroke:0.6px #000000;">AMI</div>
<div class="t" style="left:2449.6px;top:1497.5px;font-size:37px;color:#000000;font-style:italic;transform:scaleX(0.9043);-webkit-text-stroke:0.6px #000000;">Modules</div>
<div class="t" style="left:2586.3px;top:1497.5px;font-size:37px;color:#000000;font-style:italic;transform:scaleX(0.8157);-webkit-text-stroke:0.6px #000000;">based</div>
<div class="t" style="left:2679.7px;top:1497.5px;font-size:37px;color:#000000;font-style:italic;transform:scaleX(0.8538);-webkit-text-stroke:0.6px #000000;">on</div>
<div class="t" style="left:2724.1px;top:1497.5px;font-size:37px;color:#000000;font-style:italic;transform:scaleX(0.8603);-webkit-text-stroke:0.6px #000000;">5.14_RomeCrb_0ACMK034.</div>
<div class="t" style="left:1862.1px;top:1556.5px;font-size:37px;color:#000000;font-style:italic;transform:scaleX(0.8600);-webkit-text-stroke:0.6px #000000;">5.</div>
<div class="t" style="left:1918.1px;top:1556.5px;font-size:37px;color:#000000;font-style:italic;transform:scaleX(0.8971);-webkit-text-stroke:0.6px #000000;">[Milan][Enhancements]</div>
<div class="t" style="left:2265.6px;top:1556.5px;font-size:37px;color:#000000;font-style:italic;transform:scaleX(0.9009);-webkit-text-stroke:0.6px #000000;">Update</div>
<div class="t" style="left:2382.9px;top:1556.5px;font-size:37px;color:#000000;font-style:italic;transform:scaleX(0.8779);-webkit-text-stroke:0.6px #000000;">AMI</div>
<div class="t" style="left:2449.6px;top:1556.5px;font-size:37px;color:#000000;font-style:italic;transform:scaleX(0.9043);-webkit-text-stroke:0.6px #000000;">Modules</div>
<div class="t" style="left:2586.3px;top:1556.5px;font-size:37px;color:#000000;font-style:italic;transform:scaleX(0.8157);-webkit-text-stroke:0.6px #000000;">based</div>
<div class="t" style="left:2679.7px;top:1556.5px;font-size:37px;color:#000000;font-style:italic;transform:scaleX(0.8538);-webkit-text-stroke:0.6px #000000;">on</div>
<div class="t" style="left:2724.1px;top:1556.5px;font-size:37px;color:#000000;font-style:italic;transform:scaleX(0.8761);-webkit-text-stroke:0.6px #000000;">5.22_MilanCrb_0ACOU029.</div>
<div class="t" style="left:1861.3px;top:1669.2px;font-size:37px;color:#000000;font-style:italic;transform:scaleX(0.8600);-webkit-text-stroke:0.6px #000000;">6.</div>
<div class="t" style="left:1917.7px;top:1669.2px;font-size:37px;color:#000000;font-style:italic;transform:scaleX(0.8940);-webkit-text-stroke:0.6px #000000;">[Rome][Milan][Enhancements]</div>
<div class="t" style="left:2373.4px;top:1669.2px;font-size:37px;color:#000000;font-style:italic;transform:scaleX(0.7646);-webkit-text-stroke:0.6px #000000;">Fill</div>
<div class="t" style="left:2422.3px;top:1669.2px;font-size:37px;color:#000000;font-style:italic;transform:scaleX(0.8393);-webkit-text-stroke:0.6px #000000;">DUID</div>
<div class="t" style="left:2507.8px;top:1669.2px;font-size:37px;color:#000000;font-style:italic;transform:scaleX(0.9078);-webkit-text-stroke:0.6px #000000;">with</div>
<div class="t" style="left:2580.0px;top:1669.2px;font-size:37px;color:#000000;font-style:italic;transform:scaleX(0.8500);-webkit-text-stroke:0.6px #000000;">UUID</div>
<div class="t" style="left:2665.0px;top:1669.2px;font-size:37px;color:#000000;font-style:italic;transform:scaleX(0.9828);-webkit-text-stroke:0.6px #000000;">to</div>
<div class="t" style="left:2704.0px;top:1669.2px;font-size:37px;color:#000000;font-style:italic;transform:scaleX(0.8611);-webkit-text-stroke:0.6px #000000;">avoid</div>
<div class="t" style="left:2792.3px;top:1669.2px;font-size:37px;color:#000000;font-style:italic;transform:scaleX(0.8605);-webkit-text-stroke:0.6px #000000;">all</div>
<div class="t" style="left:2834.5px;top:1669.2px;font-size:37px;color:#000000;font-style:italic;transform:scaleX(0.8697);-webkit-text-stroke:0.6px #000000;">system&#39;s</div>
<div class="t" style="left:2965.5px;top:1669.2px;font-size:37px;color:#000000;font-style:italic;transform:scaleX(0.8393);-webkit-text-stroke:0.6px #000000;">DUID</div>
<div class="t" style="left:3051.8px;top:1669.2px;font-size:37px;color:#000000;font-style:italic;transform:scaleX(0.8286);-webkit-text-stroke:0.6px #000000;">in</div>
<div class="t" style="left:3083.7px;top:1669.2px;font-size:37px;color:#000000;font-style:italic;transform:scaleX(0.8473);-webkit-text-stroke:0.6px #000000;">IPv6</div>
<div class="t" style="left:1916.0px;top:1727.6px;font-size:37px;color:#000000;font-style:italic;transform:scaleX(0.7788);-webkit-text-stroke:0.6px #000000;">DHCP</div>
<div class="t" style="left:2007.3px;top:1727.6px;font-size:37px;color:#000000;font-style:italic;transform:scaleX(0.7846);-webkit-text-stroke:0.6px #000000;">is</div>
<div class="t" style="left:2037.7px;top:1727.6px;font-size:37px;color:#000000;font-style:italic;transform:scaleX(0.8680);-webkit-text-stroke:0.6px #000000;">the</div>
<div class="t" style="left:2092.9px;top:1727.6px;font-size:37px;color:#000000;font-style:italic;transform:scaleX(0.8773);-webkit-text-stroke:0.6px #000000;">same.</div>
<div class="t" style="left:1860.4px;top:1785.1px;font-size:37px;color:#000000;font-style:italic;transform:scaleX(0.8600);-webkit-text-stroke:0.6px #000000;">7.</div>
<div class="t" style="left:1918.1px;top:1785.1px;font-size:37px;color:#000000;font-style:italic;transform:scaleX(0.8717);-webkit-text-stroke:0.6px #000000;">[Rome][Enhancements]</div>
<div class="t" style="left:2265.6px;top:1785.1px;font-size:37px;color:#000000;font-style:italic;transform:scaleX(0.9009);-webkit-text-stroke:0.6px #000000;">Update</div>
<div class="t" style="left:2382.9px;top:1785.1px;font-size:37px;color:#000000;font-style:italic;transform:scaleX(0.8779);-webkit-text-stroke:0.6px #000000;">AMI</div>
<div class="t" style="left:2449.6px;top:1785.1px;font-size:37px;color:#000000;font-style:italic;transform:scaleX(0.9043);-webkit-text-stroke:0.6px #000000;">Modules</div>
<div class="t" style="left:2585.8px;top:1785.1px;font-size:37px;color:#000000;font-style:italic;transform:scaleX(0.8255);-webkit-text-stroke:0.6px #000000;">based</div>
<div class="t" style="left:2678.7px;top:1785.1px;font-size:37px;color:#000000;font-style:italic;transform:scaleX(0.8692);-webkit-text-stroke:0.6px #000000;">on</div>
<div class="t" style="left:2723.5px;top:1785.1px;font-size:37px;color:#000000;font-style:italic;transform:scaleX(0.8614);-webkit-text-stroke:0.6px #000000;">5.14_RomeCrb_0ACMK031.</div>
<div class="t" style="left:1862.1px;top:1842.6px;font-size:37px;color:#000000;font-style:italic;transform:scaleX(0.8600);-webkit-text-stroke:0.6px #000000;">8.</div>
<div class="t" style="left:1918.1px;top:1842.6px;font-size:37px;color:#000000;font-style:italic;transform:scaleX(0.8717);-webkit-text-stroke:0.6px #000000;">[Rome][Enhancements]</div>
<div class="t" style="left:2265.6px;top:1842.6px;font-size:37px;color:#000000;font-style:italic;transform:scaleX(0.9009);-webkit-text-stroke:0.6px #000000;">Update</div>
<div class="t" style="left:2382.9px;top:1842.6px;font-size:37px;color:#000000;font-style:italic;transform:scaleX(0.8779);-webkit-text-stroke:0.6px #000000;">AMI</div>
<div class="t" style="left:2449.6px;top:1842.6px;font-size:37px;color:#000000;font-style:italic;transform:scaleX(0.9043);-webkit-text-stroke:0.6px #000000;">Modules</div>
<div class="t" style="left:2585.8px;top:1842.6px;font-size:37px;color:#000000;font-style:italic;transform:scaleX(0.8255);-webkit-text-stroke:0.6px #000000;">based</div>
<div class="t" style="left:2678.7px;top:1842.6px;font-size:37px;color:#000000;font-style:italic;transform:scaleX(0.8692);-webkit-text-stroke:0.6px #000000;">on</div>
<div class="t" style="left:2723.5px;top:1842.6px;font-size:37px;color:#000000;font-style:italic;transform:scaleX(0.8614);-webkit-text-stroke:0.6px #000000;">5.14_RomeCrb_0ACMK032.</div>
<div class="t" style="left:1862.1px;top:1900.0px;font-size:37px;color:#000000;font-style:italic;transform:scaleX(0.8600);-webkit-text-stroke:0.6px #000000;">9.</div>
<div class="t" style="left:1917.7px;top:1900.0px;font-size:37px;color:#000000;font-style:italic;transform:scaleX(0.8940);-webkit-text-stroke:0.6px #000000;">[Rome][Milan][Enhancements]</div>
<div class="t" style="left:2373.2px;top:1900.0px;font-size:37px;color:#000000;font-style:italic;transform:scaleX(0.8449);-webkit-text-stroke:0.6px #000000;">For UsbBus.c Add USB IAD device class/subclass/protocol/</div>
<div class="t" style="left:1862.8px;top:1618.6px;font-size:37px;color:#000000;font-weight:700;font-style:italic;transform:scaleX(0.9303);-webkit-text-stroke:0.6px #000000;">3.0 (07/22/2024)</div>
<div class="a" style="left:598px;top:1917.5px;width:2930px;height:33px;background:#151517"></div>

<!-- status bar -->
<div class="a" style="left:16px;top:1930.5px;width:193px;height:20px;background:#2b1b0d;border-top:1px solid #000;overflow:hidden">
  <div class="t" style="left:1px;top:6px;font-size:27px;color:#f0ece6;transform:scaleX(0.86);-webkit-text-stroke:0.7px #f0ece6">10.10.20.70:8000</div>
</div>
</div></body></html>
